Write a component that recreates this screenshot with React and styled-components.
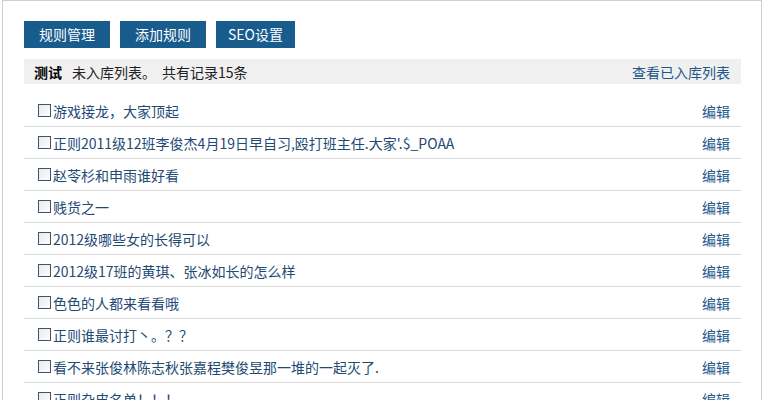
import React from 'react';
import styled, { createGlobalStyle } from 'styled-components';

const GlobalStyle = createGlobalStyle`
  body {
    margin: 0;
    background: #fff;
    font-family: "Noto Sans CJK SC", "DejaVu Sans", sans-serif;
  }
`;

const Panel = styled.div`
  margin-left: 2px;
  width: 760px;
  border: 1px solid #cfcfcf;
  border-bottom: none;
  padding: 20px 20px 0 21px;
  box-sizing: border-box;
  min-height: 420px;
`;

const Toolbar = styled.div`
  display: flex;
  gap: 10px;
`;

const NavButton = styled.button`
  height: 27px;
  padding: 0 ${(p) => p.$pad || 15}px;
  border: none;
  background: #185b8d;
  color: #fff;
  font-family: inherit;
  font-size: 14px;
  line-height: 27px;
  cursor: pointer;
`;

const HeaderBar = styled.div`
  margin-top: 11px;
  height: 25px;
  background: #f0f0f0;
  display: flex;
  align-items: center;
  justify-content: space-between;
  padding: 0 11px 0 10px;
  font-size: 14px;
  color: #222;
`;

const Title = styled.span`
  font-weight: bold;
  margin-right: 10px;
  color: #000;
`;

const Count = styled.span`
  margin-left: 6px;
`;

const HeaderLink = styled.a`
  color: #23568a;
  text-decoration: none;
`;

const List = styled.ul`
  list-style: none;
  margin: 11px 0 0;
  padding: 0;
`;

const Row = styled.li`
  height: 31px;
  border-bottom: 1px solid #dcdcdc;
  display: flex;
  align-items: center;
  justify-content: space-between;
  padding: 0 11px 0 14px;
  font-size: 14px;
`;

const Label = styled.label`
  display: flex;
  align-items: center;
  color: #1e4a74;
`;

const Box = styled.span`
  width: 11px;
  height: 11px;
  border: 1px solid #3e5468;
  background: linear-gradient(135deg, #e6e9ec, #fff);
  margin-right: 2px;
  flex: none;
`;

const EditLink = styled.a`
  color: #23568a;
  text-decoration: none;
`;

const items = [
  '游戏接龙，大家顶起',
  "正则2011级12班李俊杰4月19日早自习,殴打班主任.大家'.$_POAA",
  '赵苓杉和申雨谁好看',
  '贱货之一',
  '2012级哪些女的长得可以',
  '2012级17班的黄琪、张冰如长的怎么样',
  '色色的人都来看看哦',
  '正则谁最讨打丶。？？',
  '看不来张俊林陈志秋张嘉程樊俊昱那一堆的一起灭了.',
  '正则杂皮名单！！！',
];

export default function App() {
  return (
    <>
      <GlobalStyle />
      <Panel>
        <Toolbar>
          <NavButton>规则管理</NavButton>
          <NavButton>添加规则</NavButton>
          <NavButton $pad={12}>SEO设置</NavButton>
        </Toolbar>
        <HeaderBar>
          <div>
            <Title>测试</Title>
            <span>未入库列表。</span>
            <Count>共有记录15条</Count>
          </div>
          <HeaderLink href="#">查看已入库列表</HeaderLink>
        </HeaderBar>
        <List>
          {items.map((t, i) => (
            <Row key={i}>
              <Label>
                <Box />
                {t}
              </Label>
              <EditLink href="#">编辑</EditLink>
            </Row>
          ))}
        </List>
      </Panel>
    </>
  );
}
